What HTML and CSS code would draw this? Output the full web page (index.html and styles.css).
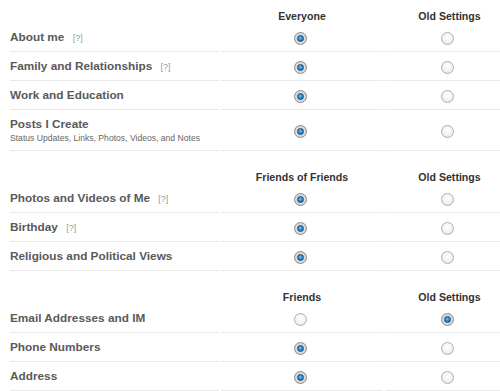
FILE: index.html
```html
<!DOCTYPE html>
<html lang="en">
<head>
  <meta charset="UTF-8">
  <title>Privacy Settings</title>
  <link rel="stylesheet" href="styles.css">
</head>
<body>
  <table class="privacy">
    <colgroup>
      <col class="col-label">
      <col class="col-choice">
      <col class="col-old">
    </colgroup>
    <tbody>
      <tr class="head first">
        <th></th>
        <th>Everyone</th>
        <th>Old Settings</th>
      </tr>
      <tr>
        <td class="label">About me <span class="help">[?]</span></td>
        <td><span class="radio on"></span></td>
        <td><span class="radio"></span></td>
      </tr>
      <tr>
        <td class="label">Family and Relationships <span class="help">[?]</span></td>
        <td><span class="radio on"></span></td>
        <td><span class="radio"></span></td>
      </tr>
      <tr>
        <td class="label">Work and Education</td>
        <td><span class="radio on"></span></td>
        <td><span class="radio"></span></td>
      </tr>
      <tr class="tall">
        <td class="label">Posts I Create
          <div class="sub">Status Updates, Links, Photos, Videos, and Notes</div>
        </td>
        <td><span class="radio on"></span></td>
        <td><span class="radio"></span></td>
      </tr>

      <tr class="head">
        <th></th>
        <th>Friends of Friends</th>
        <th>Old Settings</th>
      </tr>
      <tr>
        <td class="label">Photos and Videos of Me <span class="help">[?]</span></td>
        <td><span class="radio on"></span></td>
        <td><span class="radio"></span></td>
      </tr>
      <tr>
        <td class="label">Birthday <span class="help">[?]</span></td>
        <td><span class="radio on"></span></td>
        <td><span class="radio"></span></td>
      </tr>
      <tr>
        <td class="label">Religious and Political Views</td>
        <td><span class="radio on"></span></td>
        <td><span class="radio"></span></td>
      </tr>

      <tr class="head">
        <th></th>
        <th>Friends</th>
        <th>Old Settings</th>
      </tr>
      <tr>
        <td class="label">Email Addresses and IM</td>
        <td><span class="radio"></span></td>
        <td><span class="radio on"></span></td>
      </tr>
      <tr>
        <td class="label">Phone Numbers</td>
        <td><span class="radio on"></span></td>
        <td><span class="radio"></span></td>
      </tr>
      <tr>
        <td class="label">Address</td>
        <td><span class="radio on"></span></td>
        <td><span class="radio"></span></td>
      </tr>
    </tbody>
  </table>
</body>
</html>
```

FILE: styles.css
```css
body {
  margin: 0;
  background: #fff;
  font-family: "Liberation Sans", Arial, sans-serif;
  overflow: hidden;
}
.privacy {
  width: 506px;
  margin: 10px 0 0 8px;
  border-collapse: separate;
  border-spacing: 2px 0;
  table-layout: fixed;
}
.col-label {
  width: 209px;
}
.col-choice {
  width: 162px;
}
.col-old {
  width: 129px;
}
th {
  padding: 20px 0 0;
  height: 13px;
  line-height: 13px;
  font-size: 10.6px;
  font-weight: bold;
  color: #333;
  text-align: center;
  vertical-align: bottom;
}
.head.first th {
  padding-top: 0;
}
td {
  height: 28px;
  padding: 0;
  border-bottom: 1px solid #e9e9e9;
  text-align: center;
  vertical-align: middle;
}
.tall td {
  height: 40px;
}
.label {
  text-align: left;
  font-size: 11.8px;
  font-weight: bold;
  color: #595959;
}
.help {
  margin-left: 5px;
  font-size: 9px;
  font-weight: normal;
  color: #999;
}
.sub {
  margin-top: 2px;
  font-size: 8.6px;
  font-weight: normal;
  color: #666;
}
.radio {
  display: inline-block;
  position: relative;
  top: 1px;
  left: -2px;
  width: 11px;
  height: 11px;
  border: 1px solid #b0b0b0;
  border-radius: 50%;
  background: radial-gradient(circle at 50% 40%, #fff 0%, #f2f2f2 55%, #d6d6d6 100%);
  vertical-align: middle;
}
.radio.on {
  border-color: #8a8a8a;
  background: radial-gradient(circle, #e8e8e8 0%, #cfcfcf 100%);
}
.radio.on::after {
  content: "";
  position: absolute;
  left: 2px;
  top: 2px;
  width: 5px;
  height: 5px;
  border: 1px solid #234a6e;
  border-radius: 50%;
  background: radial-gradient(circle at 45% 40%, #7cc4f4 0%, #2a8fd6 45%, #0b4f8f 100%);
}
```
